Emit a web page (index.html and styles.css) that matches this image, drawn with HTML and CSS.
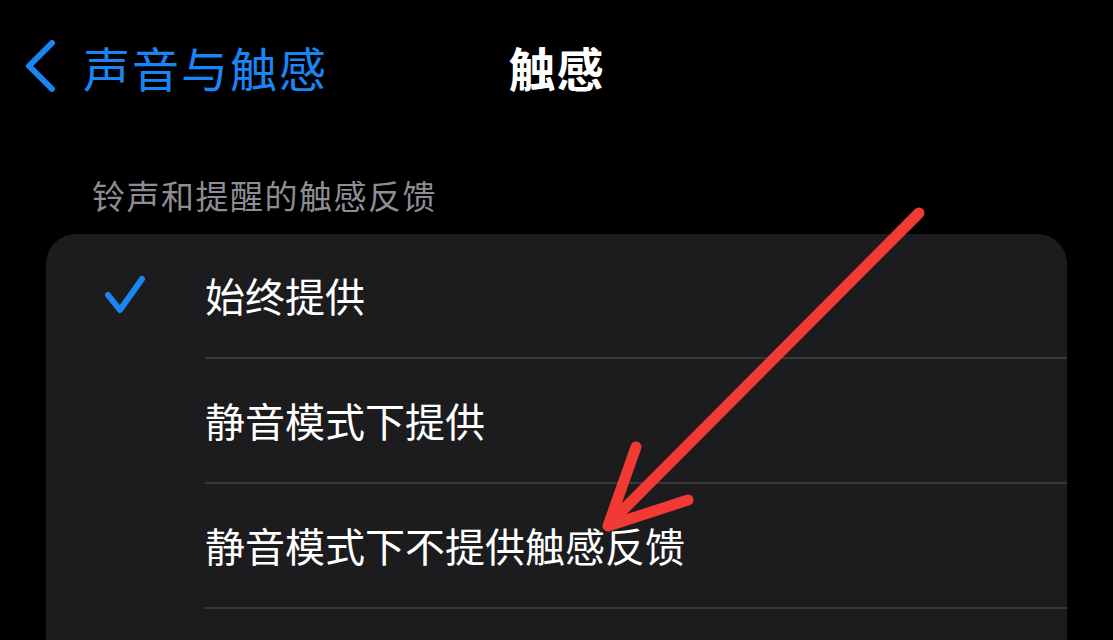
FILE: index.html
```html
<!DOCTYPE html>
<html lang="zh-CN">
<head>
<meta charset="utf-8">
<title>触感</title>
<link rel="stylesheet" href="styles.css">
</head>
<body>
<div class="screen">
  <header class="nav">
    <div class="nav-back">
      <svg class="chevron" width="36" height="56" viewBox="0 0 36 56">
        <path d="M28 4 L5 27 L28 50" fill="none" stroke="#1a86f5" stroke-width="6" stroke-linecap="round" stroke-linejoin="round"/>
      </svg>
      <span class="back-label">声音与触感</span>
    </div>
    <h1 class="nav-title">触感</h1>
    <div class="nav-spacer"></div>
  </header>

  <div class="section-header">铃声和提醒的触感反馈</div>

  <section class="card">
    <div class="row">
      <div class="row-check">
        <svg width="44" height="42" viewBox="0 0 44 42">
          <path d="M4 20 L16 35 L38 4" fill="none" stroke="#1a86f5" stroke-width="6" stroke-linecap="round" stroke-linejoin="round"/>
        </svg>
      </div>
      <div class="row-body">始终提供</div>
    </div>
    <div class="row">
      <div class="row-check"></div>
      <div class="row-body">静音模式下提供</div>
    </div>
    <div class="row">
      <div class="row-check"></div>
      <div class="row-body">静音模式下不提供触感反馈</div>
    </div>
    <div class="row row-tail">
      <div class="row-check"></div>
      <div class="row-body"></div>
    </div>
  </section>

  <svg class="annotation" width="1113" height="640" viewBox="0 0 1113 640">
    <g fill="none" stroke="#f23a35" stroke-width="11" stroke-linecap="round" stroke-linejoin="round">
      <path d="M919 213 L609 524"/>
      <path d="M636 447 L608 526 L688 500"/>
    </g>
  </svg>
</div>
</body>
</html>
```

FILE: styles.css
```css
* {
  box-sizing: border-box;
}

html, body {
  margin: 0;
  padding: 0;
  background: #000;
}

body {
  font-family: "Noto Sans CJK SC", "Noto Sans", sans-serif;
  color: #fff;
  overflow: hidden;
}

.screen {
  position: relative;
  width: 1113px;
  height: 640px;
  overflow: hidden;
}

.nav {
  height: 134px;
  display: grid;
  grid-template-columns: 1fr auto 1fr;
  align-items: center;
}

.nav-back {
  display: flex;
  align-items: center;
  padding-left: 24px;
  gap: 23px;
}

.chevron {
  display: block;
  flex: none;
}

.back-label {
  font-size: 47px;
  line-height: 1.2;
  color: #1a86f5;
  letter-spacing: 2px;
}

.nav-title {
  margin: 0;
  font-size: 47px;
  line-height: 1.2;
  font-weight: 700;
  color: #fff;
  letter-spacing: 1px;
}

.section-header {
  margin-top: 42px;
  padding-left: 92px;
  font-size: 33px;
  line-height: 1.2;
  color: #8d8d93;
  letter-spacing: 1.5px;
}

.card {
  margin: 18px 46px 0 46px;
  background: #1c1c1e;
  border-radius: 30px;
}

.row {
  display: flex;
  height: 125px;
}

.row-check {
  width: 159px;
  flex: none;
  display: flex;
  align-items: center;
  padding-left: 58px;
}

.row-check svg {
  display: block;
}

.row-body {
  flex: 1;
  display: flex;
  align-items: center;
  font-size: 40px;
  line-height: 1.2;
  color: #fff;
  border-bottom: 2px solid #38383a;
}

.row-tail .row-body {
  border-bottom: none;
}

.annotation {
  position: absolute;
  left: 0;
  top: 0;
  pointer-events: none;
}
```
